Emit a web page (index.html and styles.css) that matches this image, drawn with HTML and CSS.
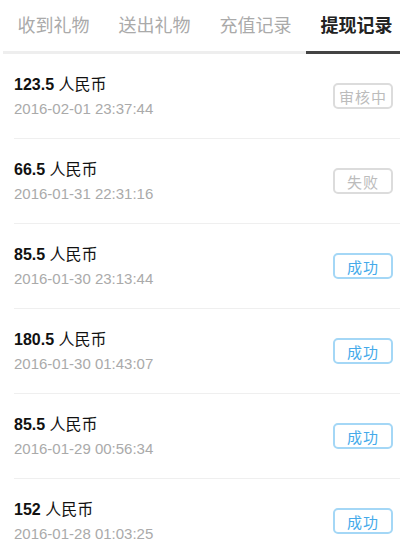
FILE: index.html
```html
<!DOCTYPE html>
<html lang="zh">
<head>
<meta charset="utf-8">
<link rel="stylesheet" href="styles.css">
</head>
<body>
<div class="tabs">
  <div class="tab">收到礼物</div>
  <div class="tab">送出礼物</div>
  <div class="tab">充值记录</div>
  <div class="tab active">提现记录</div>
</div>
<ul class="list">
  <li class="row">
    <div class="info"><div class="title"><b>123.5</b> 人民币</div><div class="date">2016-02-01 23:37:44</div></div>
    <span class="badge gray">审核中</span>
  </li>
  <li class="row">
    <div class="info"><div class="title"><b>66.5</b> 人民币</div><div class="date">2016-01-31 22:31:16</div></div>
    <span class="badge gray">失败</span>
  </li>
  <li class="row">
    <div class="info"><div class="title"><b>85.5</b> 人民币</div><div class="date">2016-01-30 23:13:44</div></div>
    <span class="badge blue">成功</span>
  </li>
  <li class="row">
    <div class="info"><div class="title"><b>180.5</b> 人民币</div><div class="date">2016-01-30 01:43:07</div></div>
    <span class="badge blue">成功</span>
  </li>
  <li class="row">
    <div class="info"><div class="title"><b>85.5</b> 人民币</div><div class="date">2016-01-29 00:56:34</div></div>
    <span class="badge blue">成功</span>
  </li>
  <li class="row">
    <div class="info"><div class="title"><b>152</b> 人民币</div><div class="date">2016-01-28 01:03:25</div></div>
    <span class="badge blue">成功</span>
  </li>
</ul>
</body>
</html>
```
FILE: styles.css
```css
html, body {
  margin: 0;
  padding: 0;
  background: #fff;
  overflow: hidden;
  width: 400px;
  height: 541px;
}
body {
  font-family: "Liberation Sans", "Noto Sans CJK SC", sans-serif;
  color: #111;
}
.tabs {
  display: flex;
  margin-left: 3px;
  width: 404px;
}
.tab {
  width: 101px;
  flex: none;
  height: 51px;
  line-height: 49px;
  text-align: center;
  font-family: "Noto Sans CJK SC", sans-serif;
  font-size: 18px;
  color: #aaa;
  border-bottom: 3px solid #eeeeee;
}
.tab.active {
  color: #222;
  font-weight: bold;
  border-bottom-color: #444;
}
.list {
  list-style: none;
  margin: 0;
  padding: 0 0 0 14px;
}
.row {
  display: flex;
  align-items: center;
  justify-content: space-between;
  height: 84px;
  border-bottom: 1px solid #efefef;
  padding-right: 7px;
}
.info {
  display: flex;
  flex-direction: column;
  gap: 5px;
}
.title {
  font-size: 16px;
  line-height: 20px;
  color: #111;
}
.title b {
  font-weight: bold;
}
.date {
  font-size: 15px;
  line-height: 18px;
  color: #aaa;
}
.badge {
  width: 60px;
  height: 26px;
  box-sizing: border-box;
  border: 2px solid;
  border-radius: 5px;
  display: flex;
  align-items: center;
  justify-content: center;
  font-family: "Noto Sans CJK SC", sans-serif;
  font-size: 15px;
  letter-spacing: 1px;
}
.badge.gray {
  border-color: #dcdcdc;
  color: #bcbcbc;
}
.badge.blue {
  border-color: #a4d7f6;
  color: #45aaea;
}
```
